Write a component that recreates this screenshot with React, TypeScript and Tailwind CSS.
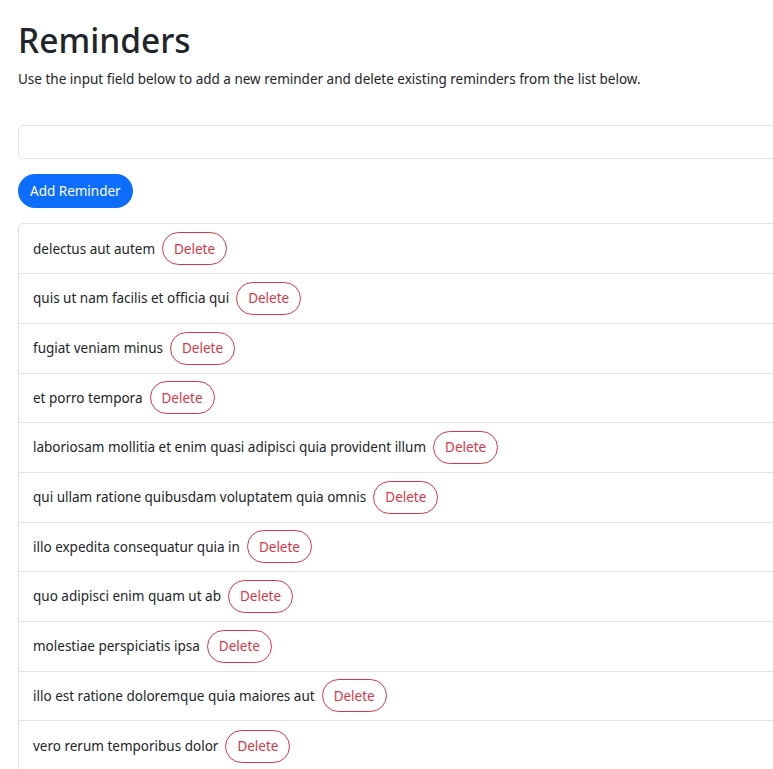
import { useState } from 'react'

const initial = [
  'delectus aut autem',
  'quis ut nam facilis et officia qui',
  'fugiat veniam minus',
  'et porro tempora',
  'laboriosam mollitia et enim quasi adipisci quia provident illum',
  'qui ullam ratione quibusdam voluptatem quia omnis',
  'illo expedita consequatur quia in',
  'quo adipisci enim quam ut ab',
  'molestiae perspiciatis ipsa',
  'illo est ratione doloremque quia maiores aut',
  'vero rerum temporibus dolor',
]

export default function App() {
  const [items, setItems] = useState(initial)
  const [text, setText] = useState('')

  function add() {
    if (!text.trim()) return
    setItems([...items, text.trim()])
    setText('')
  }

  return (
    <div className="h-[769px] overflow-hidden bg-white text-[#212529] [font-family:'Noto_Sans',sans-serif]">
      <div className="w-[1000px] px-[18px] pt-[20px]">
        <h1 className="text-[33.5px] font-medium leading-[1.2] mb-[9px]">Reminders</h1>
        <p className="text-[13.5px] leading-[1.5] mb-[36px]">
          Use the input field below to add a new reminder and delete existing reminders from the list below.
        </p>

        <input
          type="text"
          value={text}
          onChange={e => setText(e.target.value)}
          className="block w-full h-[34px] border border-[#dee2e6] rounded-[5px] px-[11px] text-[13.5px] outline-none"
        />

        <button
          onClick={add}
          className="mt-[15px] h-[34px] px-[12px] rounded-full bg-[#0d6efd] text-white text-[13.5px]"
        >
          Add Reminder
        </button>

        <ul className="mt-[15px] border border-[#dee2e6] rounded-[5px]">
          {items.map((item, i) => (
            <li key={i} className="flex items-center h-[49.7px] px-[14px] border-b border-[#dee2e6] last:border-b-0 text-[13.5px]">
              <span>{item}</span>
              <button
                onClick={() => setItems(items.filter((_, j) => j !== i))}
                className="ml-[7px] h-[33px] px-[11px] rounded-full border border-[#dc3545] text-[#dc3545] text-[13.5px]"
              >
                Delete
              </button>
            </li>
          ))}
        </ul>
      </div>
    </div>
  )
}
